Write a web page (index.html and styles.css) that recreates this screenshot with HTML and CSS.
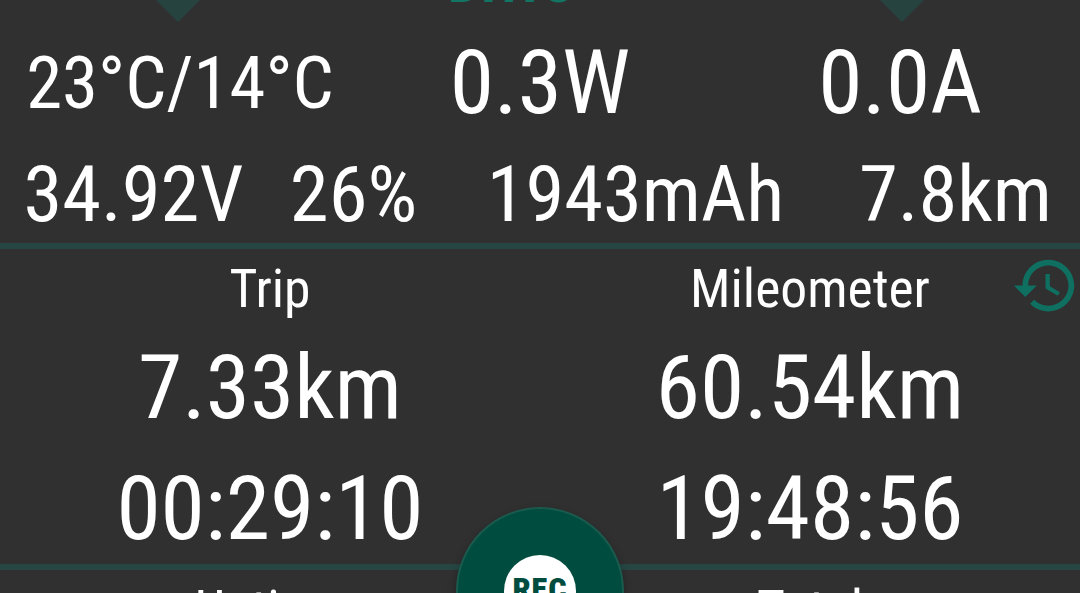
FILE: index.html
```html
<!DOCTYPE html>
<html lang="en">
<head>
    <meta charset="UTF-8">
    <meta name="viewport" content="width=device-width, initial-scale=1.0">
    <title>Ride dashboard</title>
    <link rel="stylesheet" href="styles.css">
</head>
<body>
    <div class="dashboard">
        <!-- Mode selector -->
        <div class="mode">
            <svg class="arrow" width="48" height="24" viewBox="0 0 48 24"><path d="M0 -1h48L24 23z"/></svg>
            <span class="mode-name">Drive</span>
            <svg class="arrow" width="48" height="24" viewBox="0 0 48 24"><path d="M0 -1h48L24 23z"/></svg>
        </div>

        <!-- Live values -->
        <div class="live">
            <span class="temp">23°C/14°C</span>
            <span>0.3W</span>
            <span>0.0A</span>
        </div>
        <div class="battery">
            <span>34.92V</span>
            <span>26%</span>
            <span>1943mAh</span>
            <span>7.8km</span>
        </div>

        <!-- Distance and time -->
        <div class="stats">
            <div class="stat">
                <span class="label">Trip</span>
                <span class="value">7.33km</span>
                <span class="value">00:29:10</span>
            </div>
            <div class="stat">
                <span class="label">Mileometer</span>
                <span class="value">60.54km</span>
                <span class="value">19:48:56</span>
            </div>
            <svg class="history" viewBox="0 0 24 24"><path d="M13 3c-4.97 0-9 4.03-9 9H1l3.89 3.89.07.14L9 12H6c0-3.87 3.13-7 7-7s7 3.13 7 7-3.13 7-7 7c-1.93 0-3.68-.79-4.94-2.06l-1.42 1.42C8.27 19.99 10.51 21 13 21c4.97 0 9-4.03 9-9s-4.03-9-9-9zm-1 5v5l4.28 2.54.72-1.21-3.5-2.08V8H12z"/></svg>
        </div>
        <div class="stats">
            <div class="stat">
                <span class="label">Uptime</span>
            </div>
            <div class="stat">
                <span class="label">Total</span>
            </div>
        </div>

        <button class="record"><span class="record-icon">REC</span></button>
    </div>
</body>
</html>
```
FILE: styles.css
```css
body {
    margin: 0;
    background-color: #303030;
    color: #fff;
    font-family: "Roboto Condensed", Roboto, sans-serif;
    font-stretch: 75%;
}
.dashboard {
    position: relative;
    height: 593px;
    overflow: hidden;
}
.mode {
    display: flex;
    justify-content: space-between;
    align-items: flex-end;
    height: 23px;
    padding: 0 154px;
}
.arrow {
    fill: #274340;
}
.mode-name {
    margin: 0 61px 6px 0;
    color: #127564;
    font-size: 60px;
    font-weight: bold;
    line-height: 70px;
}
.live {
    display: grid;
    grid-template-columns: repeat(3, 1fr);
    align-items: center;
    height: 119px;
    font-size: 89.6px;
    text-align: center;
}
.temp {
    font-size: 72.8px;
}
.battery {
    display: grid;
    grid-template-columns: 267px 173px 391px 249px;
    height: 101px;
    font-size: 78.6px;
    line-height: 105px;
    text-align: center;
}
.stats {
    position: relative;
    display: flex;
    height: 315px;
    border-top: 6px solid #264643;
}
.stat {
    display: flex;
    flex: 1;
    flex-direction: column;
    text-align: center;
}
.label {
    height: 78px;
    font-size: 53.6px;
    line-height: 79px;
}
.value {
    font-size: 89.6px;
    line-height: 121px;
}
.history {
    position: absolute;
    top: 2px;
    right: 0;
    width: 69px;
    height: 69px;
    fill: #0f6f60;
}
.record {
    position: absolute;
    top: 507px;
    left: 456px;
    display: flex;
    justify-content: center;
    align-items: center;
    width: 168px;
    height: 168px;
    padding: 0;
    border: 2px solid #1a5b4e;
    border-radius: 50%;
    background-color: #004d40;
    box-shadow: 0 4px 8px rgba(0, 0, 0, 0.3);
}
.record-icon {
    width: 72px;
    height: 72px;
    border-radius: 50%;
    background-color: #fff;
    color: #004d40;
    font: 900 32px/68px Roboto, sans-serif;
    font-stretch: 75%;
    letter-spacing: 1px;
}
```
